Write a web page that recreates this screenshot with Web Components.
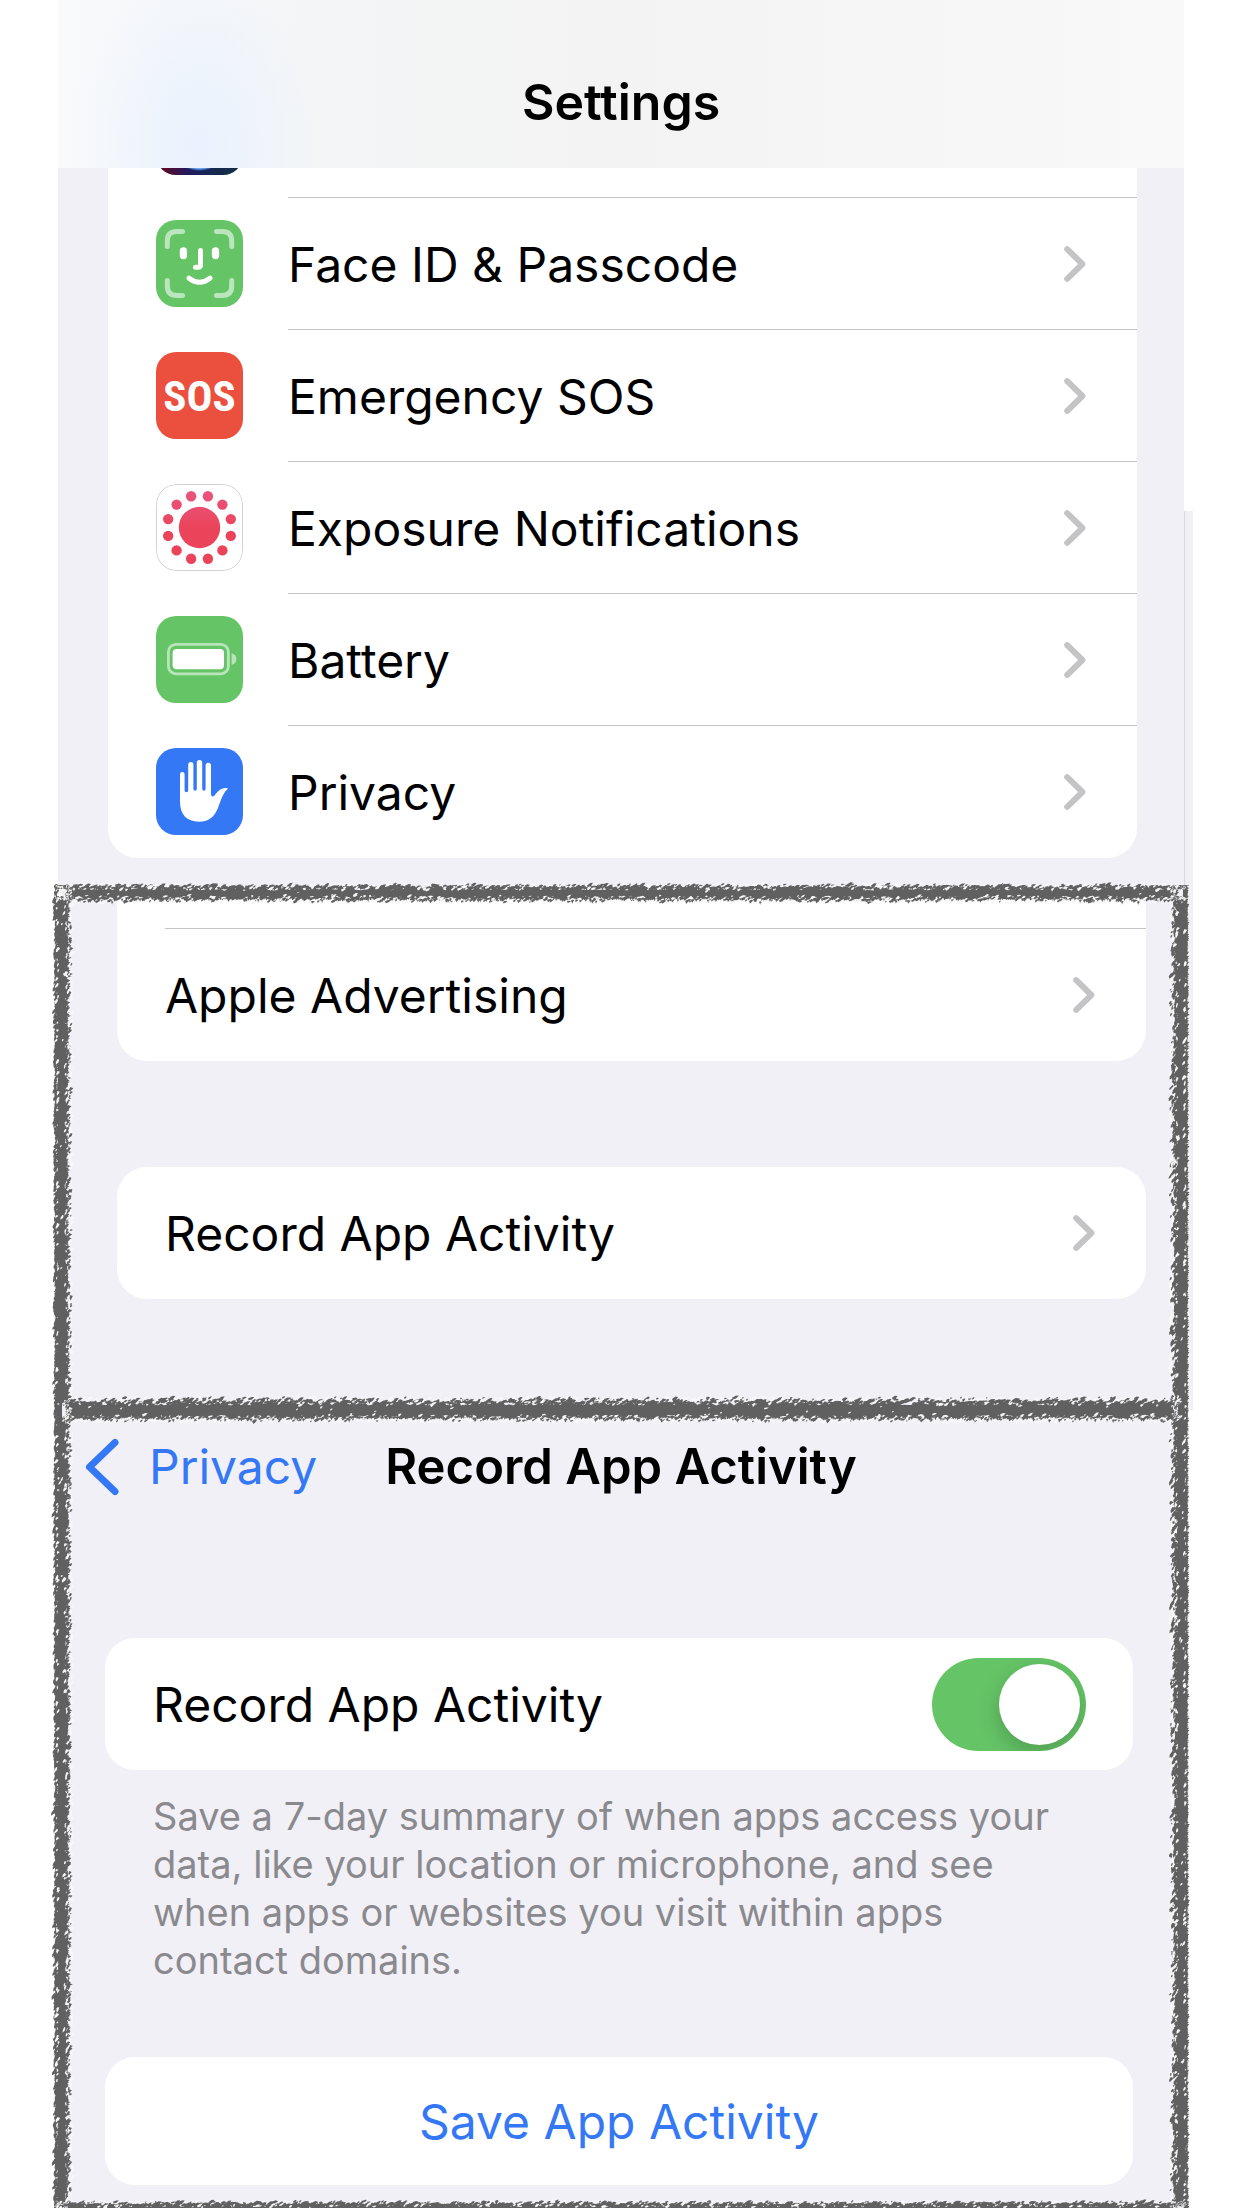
<!DOCTYPE html>
<html lang="en">
<head>
<meta charset="utf-8">
<meta name="viewport" content="width=device-width, initial-scale=1">
<title>Settings</title>
<style>
html, body { margin: 0; background: #fff; }
body { font-family: Inter, "Liberation Sans", sans-serif; font-size: 48px; line-height: 60px; color: #000; }
</style>
</head>
<body>
<settings-app></settings-app>

<template id="t-app">
<style>
:host { display: block; overflow: hidden; --bg: #f1f0f6; --green: #65c466; --blue: #3478f6; }
.first { margin: 0 58px; background: var(--bg); padding-bottom: 35px; }
.first list-card { margin: 0 47px 0 50px; }
.sheet { position: relative; margin: 0 62px; }
.privacy { position: relative; background: var(--bg); margin-right: -13px; padding: 0 47px 111px 55px; }
.privacy::before { content: ""; position: absolute; right: 0; bottom: 100%; width: 8px; height: 382px; background: var(--bg); border-left: 1px solid #dadade; }
.privacy list-card + list-card { margin-top: 106px; }
.record { background: var(--bg); margin-right: -4px; padding: 0 51px 23px 43px; }
.record nav-bar { margin: 0 -51px 0 -20px; }
p { margin: 0; padding: 22px 48px 73px; font-size: 38px; line-height: 48px; color: #8a8a8e; max-width: 920px; }
</style>
<section class="first">
  <title-bar>Settings</title-bar>
  <list-card open>
    <list-row peek><app-icon slot="icon" name="siri"></app-icon></list-row>
    <list-row href="#face"><app-icon slot="icon" name="face"></app-icon>Face ID &amp; Passcode</list-row>
    <list-row href="#sos"><app-icon slot="icon" name="sos"></app-icon>Emergency SOS</list-row>
    <list-row href="#exposure"><app-icon slot="icon" name="exposure"></app-icon>Exposure Notifications</list-row>
    <list-row href="#battery"><app-icon slot="icon" name="battery"></app-icon>Battery</list-row>
    <list-row href="#privacy" last><app-icon slot="icon" name="hand"></app-icon>Privacy</list-row>
  </list-card>
</section>
<div class="sheet">
  <section class="privacy">
    <list-card open>
      <list-row gap></list-row>
      <list-row href="#ads" last>Apple Advertising</list-row>
    </list-card>
    <list-card><list-row href="#record" last>Record App Activity</list-row></list-card>
  </section>
  <section class="record">
    <nav-bar><span slot="back">Privacy</span>Record App Activity</nav-bar>
    <list-card><toggle-row>Record App Activity</toggle-row></list-card>
    <p>Save a 7-day summary of when apps access your data, like your location or microphone, and see when apps or websites you visit within apps contact domains.</p>
    <list-card><action-row>Save App Activity</action-row></list-card>
  </section>
  <chalk-frame></chalk-frame>
</div>
</template>

<template id="t-title">
<style>
:host { display: flex; justify-content: center; height: 168px; box-sizing: border-box; padding-top: 72px;
 background: radial-gradient(ellipse 130px 190px at 140px 145px, #e9f2fe 0, #ecf3fdaa 45%, #f0f4fa00 100%), linear-gradient(90deg, #f9fafc 0, #f4f5f6 22%, #f3f3f3 50%, #f6f6f6 75%, #f9f9f9 100%); }
h1 { margin: 0; font-size: 50px; line-height: 60px; font-weight: 600; }
</style>
<h1><slot></slot></h1>
</template>

<template id="t-card">
<style>
:host { display: block; background: #fff; border-radius: 30px; overflow: hidden; }
:host([open]) { border-top-left-radius: 0; border-top-right-radius: 0; }
</style>
<slot></slot>
</template>

<template id="t-row">
<style>
:host { display: block; }
a { display: flex; align-items: center; padding-left: 48px; color: inherit; text-decoration: none; }
.body { flex: 1; display: flex; align-items: center; justify-content: space-between; min-height: 131px; border-bottom: 1px solid #c4c4c7; padding-right: 51px; }
.text { padding-top: 2px; }
slot[name=icon]::slotted(*) { margin: 0 45px 1px 0; }
svg { width: 22px; height: 36px; display: block; }
:host([last]) .body { border-bottom-color: transparent; }
:host([peek]) a { height: 30px; align-items: flex-end; overflow: hidden; }
:host([peek]) slot[name=icon]::slotted(*) { margin-bottom: 23px; }
:host([peek]) .body { height: 29px; min-height: 0; }
:host([gap]) .body { height: 35px; min-height: 0; }
:host([peek]) svg, :host([gap]) svg, :host([peek]) .text, :host([gap]) .text { display: none; }
</style>
<a><slot name="icon"></slot><span class="body"><span class="text"><slot></slot></span>
<svg viewBox="0 0 22 36" aria-hidden="true"><path d="M3.2 3.2 18.4 18 3.2 32.8" fill="none" stroke="#c4c4c6" stroke-width="6" stroke-linecap="round" stroke-linejoin="round"/></svg></span></a>
</template>

<template id="t-toggle">
<style>
:host { display: flex; align-items: center; justify-content: space-between; min-height: 132px; padding: 0 47px 0 48px; }
label { padding-top: 2px; }
input { appearance: none; margin: 0; width: 154px; height: 93px; border-radius: 47px; background: #d8d8dc; display: flex; align-items: center; padding: 0 6px; box-sizing: border-box; overflow: hidden; }
input:checked { background: var(--green); justify-content: flex-end; }
input::before { content: ""; width: 81px; height: 81px; border-radius: 50%; background: #fff; box-shadow: 0 8px 22px #0003; }
</style>
<label for="sw"><slot></slot></label><input id="sw" type="checkbox" role="switch" checked>
</template>

<template id="t-action">
<style>
:host { display: block; }
button { display: block; width: 100%; min-height: 128px; padding: 2px 0 0; border: 0; background: none; font: inherit; color: var(--blue); }
</style>
<button type="button"><slot></slot></button>
</template>

<template id="t-nav">
<style>
:host { display: flex; align-items: center; gap: 68px; padding: 27px 0 141px; }
a { display: flex; align-items: center; gap: 30px; color: var(--blue); text-decoration: none; }
svg { width: 34px; height: 58px; display: block; }
h2 { margin: 0; font-size: 49px; line-height: 60px; font-weight: 600; }
</style>
<a href="#back"><svg viewBox="0 0 34 58" aria-hidden="true"><path d="M30 4.5 4.5 29 30 53.5" fill="none" stroke="#3478f6" stroke-width="7" stroke-linecap="round" stroke-linejoin="round"/></svg><slot name="back"></slot></a>
<h2><slot></slot></h2>
</template>

<template id="t-icon">
<style>
:host { display: flex; align-items: center; justify-content: center; flex: none; width: 87px; height: 87px; border-radius: 20px; overflow: hidden; }
:host([name=face]), :host([name=battery]) { background: var(--green); }
:host([name=sos]) { background: #eb4f3d; }
:host([name=hand]) { background: var(--blue); }
:host([name=siri]) { background: radial-gradient(circle 31px at 50% 52px, #69a8f8 0 92%, #14235c 100%, transparent), linear-gradient(90deg, #5a0a28 10%, #26185c 35%, #152556 55%, #142e48 85%); }
svg { width: 87px; height: 87px; display: block; }
b { font: 700 43px/60px "Liberation Sans Narrow", "Roboto Condensed", "Open Sans Condensed", "DejaVu Sans Condensed", sans-serif; color: #fff; }
</style>
</template>

<template id="t-chalk">
<style>
:host { position: absolute; inset: -20px; pointer-events: none; }
svg { width: 100%; height: 100%; display: block; overflow: visible; }
</style>
<svg aria-hidden="true"><path id="halo" fill="#f8f8fa"/><path id="ink" fill="#606060"/><path id="fleck" fill="#f6f6f8"/></svg>
</template>

<script>
const define = (name, tpl, setup) => customElements.define(name, class extends HTMLElement {
  constructor() {
    super();
    this.attachShadow({ mode: "open" }).append(document.getElementById(tpl).content.cloneNode(true));
  }
  connectedCallback() { if (setup) setup(this, this.shadowRoot); }
});

const dots = Array.from({ length: 12 }, (_, i) => {
  const a = (15 + 30 * i) * Math.PI / 180;
  return `<circle cx="${(43.5 + 32.4 * Math.cos(a)).toFixed(1)}" cy="${(43.5 + 32.4 * Math.sin(a)).toFixed(1)}" r="5.2"/>`;
}).join("");
const ICONS = {
  siri: "",
  sos: "<b>SOS</b>",
  face: `<svg viewBox="0 0 87 87" fill="none" stroke-width="5" stroke-linecap="round"><g stroke="#bbe6bd"><path d="M11.3 26.5V21Q11.3 11.5 20.8 11.5H26.5M60.5 11.5H66.2Q75.7 11.5 75.7 21V26.5M11.3 60.5V66Q11.3 75.5 20.8 75.5H26.5M60.5 75.5H66.2Q75.7 75.5 75.7 66V60.5"/></g><g stroke="#fff"><path d="M44.5 30.5V44.5Q44.5 47.3 42 47.3H39.5M33 58.2Q43.5 66.2 54 58.2"/><path stroke-width="7.3" d="M27.4 30.8V35.6M59.5 30.8V35.6"/></g></svg>`,
  exposure: `<svg viewBox="0 0 87 87"><defs><linearGradient id="g" gradientUnits="userSpaceOnUse" x1="0" y1="5" x2="0" y2="45"><stop offset="0" stop-color="#ea5580"/><stop offset="1" stop-color="#eb445a"/></linearGradient></defs><rect x=".5" y=".5" width="86" height="86" rx="20" fill="#fff" stroke="#d2d2d4"/><g fill="url(#g)"><circle cx="43.5" cy="43.5" r="20.7"/>${dots}</g></svg>`,
  battery: `<svg viewBox="0 0 87 87"><rect x="12.4" y="28.4" width="60" height="29.4" rx="7.5" fill="none" stroke="#b9e5ba" stroke-width="2.8"/><rect x="16.6" y="33" width="51.4" height="20.2" rx="4" fill="#fff"/><path d="M75.6 37.2Q80.4 38.6 80.4 43.1T75.6 49Z" fill="#b9e5ba"/></svg>`,
  hand: `<svg viewBox="0 0 87 87"><path fill="#fff" d="M24 26.3a2.3 2.3 0 0 1 4.6 0V42.5a1.8 1.8 0 0 0 3.6 0V16.6a2.6 2.6 0 0 1 5.2 0V41a1.7 1.7 0 0 0 3.4 0V14.7a2.7 2.7 0 0 1 5.4 0V41a1.7 1.7 0 0 0 3.4 0V17.5a2.7 2.7 0 0 1 5.4 0V46.5C55.2 48.6 57 49.2 58.5 47.6C61.5 44.2 64.5 39.3 71.3 40.2C71.8 40.3 71.8 40.9 71.4 41.3C65.6 46.6 64.5 54.5 61.3 61.5C57.8 69.5 52 73.7 43 73.7C30.5 73.7 24 66.5 24 53.5Z"/></svg>`
};

// Chalk line: pale halo, a ragged solid core [a,b], slanted dabs out to the fringe [c,d], and a few flecks.
function chalk(len, vertical, at, start, core, fringe, rnd) {
  const pt = (t, n) => vertical ? `${(at + n).toFixed(1)} ${(start + t).toFixed(1)}` : `${(start + t).toFixed(1)} ${(at + n).toFixed(1)}`;
  const [a, b] = core, [c, d] = fringe;
  let halo = "", ink = "", fleck = "", top = [], bottom = [];
  for (let t = 0; t <= len; t += 3) {
    top.push(pt(t, a + (rnd() - .4) * 4));
    bottom.unshift(pt(t, b + (rnd() - .6) * 4));
  }
  ink += "M" + top.concat(bottom).join("L") + "Z";
  const dab = (t, n, l, w) => {
    const s = rnd() * .5 + .1;
    return `M${pt(t, n)}L${pt(t + l * .55, n - l * s * .7)}L${pt(t + l, n - l * s + w * .4)}L${pt(t + l * .6, n + w * .5)}L${pt(t + w * .4, n + w)}Z`;
  };
  for (let t = 0; t < len; t += 2) {
    halo += dab(t, c + rnd() * (a - c), 4, 2) + dab(t, b + rnd() * (d - b), 4, 2);
    ink += dab(t, a - rnd() * rnd() * (a - c), 3 + rnd() * 4, 1.6 + rnd() * 2);
    ink += dab(t, b + rnd() * rnd() * (d - b) - 1, 2 + rnd() * 4, 1.6 + rnd() * 1.8);
    if (rnd() < .6) ink += dab(t, rnd() < .5 ? a - rnd() * (a - c) : b + rnd() * (d - b) - 1, 1.5 + rnd() * 2.5, 1.5);
    if (rnd() < .28) {
      const n = rnd() < .5 ? a - (a - c) * rnd() + 2 : b + (d - b) * rnd() - 3;
      fleck += dab(t, n, 2 + rnd() * 4, 1 + rnd() * 1.6);
    }
    if (rnd() < .04) fleck += dab(t, a + (b - a) * rnd(), 2 + rnd() * 3, .8 + rnd());
  }
  return [halo, ink, fleck];
}

define("app-icon", "t-icon", (el, root) => root.append(document.createRange().createContextualFragment(ICONS[el.getAttribute("name")])));
define("title-bar", "t-title");
define("list-card", "t-card");
define("list-row", "t-row", (el, root) => {
  const href = el.getAttribute("href");
  if (href) root.querySelector("a").href = href;
});
define("toggle-row", "t-toggle");
define("action-row", "t-action");
define("nav-bar", "t-nav");
define("chalk-frame", "t-chalk", (el, root) => {
  const draw = () => {
    let seed = 7;
    const rnd = () => (seed = (seed * 16807) % 2147483647) / 2147483647;
    const w = el.clientWidth - 40, h = el.clientHeight - 40;
    const divider = el.parentElement.querySelector(".record").offsetTop;
    const lines = [
      chalk(w + 12, false, 20, 13, [-5, 5], [-9, 10], rnd),
      chalk(w, false, 20 + divider, 20, [-7, 7], [-13, 12], rnd),
      chalk(w + 12, false, 20 + h, 13, [-3, 8], [-7, 12], rnd),
      chalk(h + 8, true, 20, 12, [-6, 5], [-8, 10], rnd),
      chalk(h + 8, true, 20 + w, 12, [-4, 7], [-10, 8], rnd)
    ];
    ["halo", "ink", "fleck"].forEach((id, i) => root.getElementById(id).setAttribute("d", lines.map(l => l[i]).join("")));
  };
  new ResizeObserver(draw).observe(el);
});
define("settings-app", "t-app");
</script>
</body>
</html>
